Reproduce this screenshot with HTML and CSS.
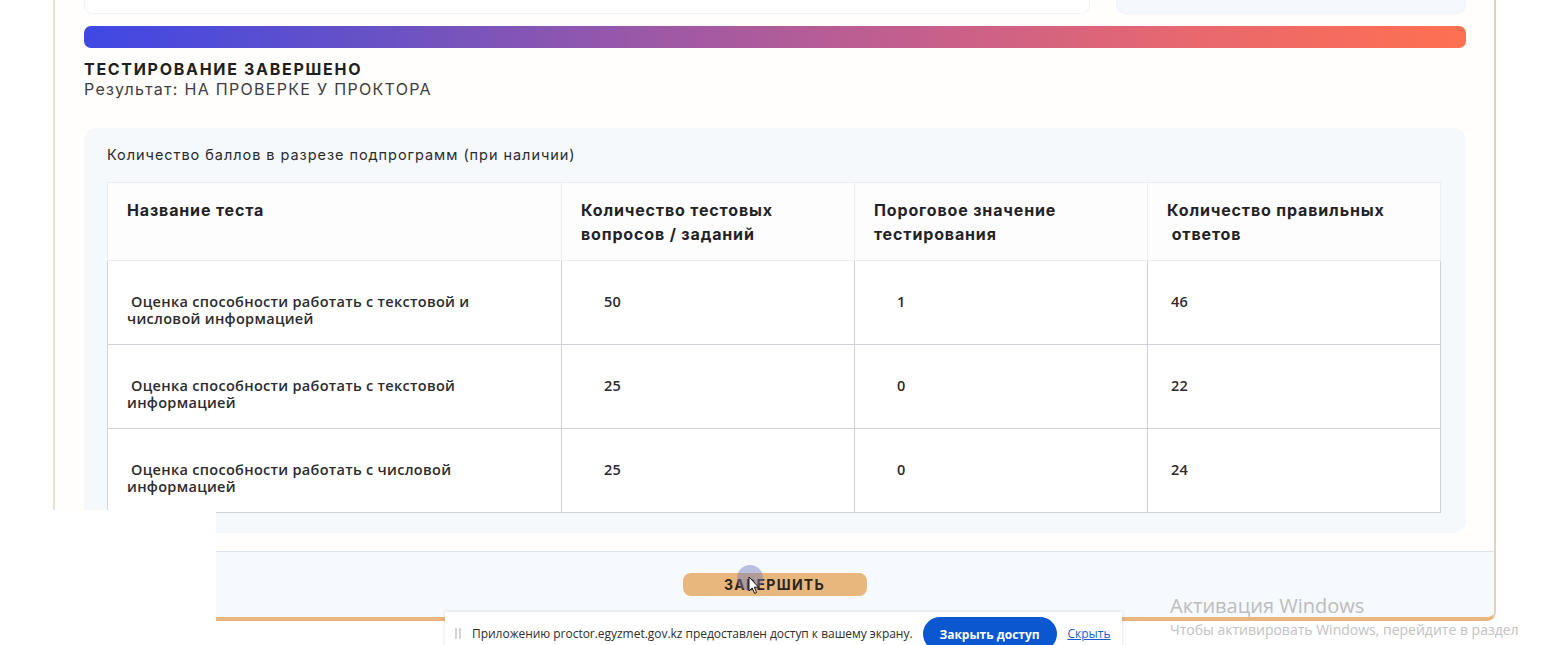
FILE: index.html
```html
<!DOCTYPE html>
<html>
<head>
    <meta charset="UTF-8">
    <title>Тестирование завершено</title>
    <link rel="stylesheet" href="styles.css">
</head>
<body>
    <div class="result-card">
        <div class="card-body">
            <div class="top-row">
                <div class="top-box"></div>
                <div class="top-box side"></div>
            </div>
            <div class="progress-bar"></div>
            <div class="status">
                <h1>ТЕСТИРОВАНИЕ ЗАВЕРШЕНО</h1>
                <p>Результат: НА ПРОВЕРКЕ У ПРОКТОРА</p>
            </div>
            <div class="scores">
                <div class="scores-title">Количество баллов в разрезе подпрограмм (при наличии)</div>
                <table class="scores-table">
                    <thead>
                        <tr>
                            <th class="col-name">Название теста</th>
                            <th class="col-count">Количество тестовых<br>вопросов / заданий</th>
                            <th class="col-count">Пороговое значение<br>тестирования</th>
                            <th class="col-count">Количество правильных<br>&nbsp;ответов</th>
                        </tr>
                    </thead>
                    <tbody>
                        <tr>
                            <td>&nbsp;Оценка способности работать с текстовой и<br>числовой информацией</td>
                            <td class="num">50</td>
                            <td class="num">1</td>
                            <td class="num last">46</td>
                        </tr>
                        <tr>
                            <td>&nbsp;Оценка способности работать с текстовой<br>информацией</td>
                            <td class="num">25</td>
                            <td class="num">0</td>
                            <td class="num last">22</td>
                        </tr>
                        <tr>
                            <td>&nbsp;Оценка способности работать с числовой<br>информацией</td>
                            <td class="num">25</td>
                            <td class="num">0</td>
                            <td class="num last">24</td>
                        </tr>
                    </tbody>
                </table>
            </div>
        </div>
        <div class="card-footer">
            <button class="finish-button">ЗАВЕРШИТЬ</button>
        </div>
    </div>

    <!-- screen capture artifacts -->
    <div class="capture-gap"></div>

    <svg class="cursor" width="30" height="32" viewBox="0 0 30 32">
        <circle cx="14" cy="13" r="13" fill="rgba(110,120,185,0.45)"/>
        <path d="M13 12 L13 26 L16.2 23 L18.6 28.4 L20.6 27.5 L18.3 22.2 L22.6 22.2 Z" fill="#fff" stroke="#111" stroke-width="1"/>
    </svg>

    <div class="share-bar">
        <span class="grip"></span>
        <span class="share-text">Приложению proctor.egyzmet.gov.kz предоставлен доступ к вашему экрану.</span>
        <button class="share-stop">Закрыть доступ</button>
        <a class="share-hide" href="#">Скрыть</a>
    </div>

    <div class="activation">
        <div class="activation-title">Активация Windows</div>
        <div class="activation-text">Чтобы активировать Windows, перейдите в раздел</div>
    </div>
</body>
</html>
```

FILE: styles.css
```css
* {
    margin: 0;
    padding: 0;
    box-sizing: border-box;
}

body {
    width: 1543px;
    height: 645px;
    overflow: hidden;
    position: relative;
    background-color: #ffffff;
    font-family: 'Inter', 'Open Sans', sans-serif;
    color: #222;
}

.result-card {
    margin-left: 53px;
    width: 1443px;
    background-color: #fffefd;
    border-left: 2px solid #e9e2d0;
    border-right: 2px solid #e3d2b3;
    border-bottom: 4px solid #e8b67f;
    border-bottom-right-radius: 9px;
}

.card-body {
    padding: 0 28px 18px 29px;
}

.top-row {
    display: flex;
    gap: 26px;
    height: 14px;
}

.top-box {
    width: 1006px;
    background-color: #ffffff;
    border: 1px solid #f2f2f2;
    border-top: none;
    border-radius: 0 0 9px 9px;
}

.top-box.side {
    flex: 1;
    background-color: #f5f9fd;
    border-color: #eef3f8;
}

.progress-bar {
    margin-top: 12px;
    height: 22px;
    border-radius: 7px;
    background: linear-gradient(90deg, #3f48e4 0%, #6a52c4 22%, #9a58a8 40%, #c8608a 62%, #e8686f 80%, #ff7050 100%);
}

.status {
    margin-top: 11px;
}

.status h1 {
    font-size: 16px;
    line-height: 20px;
    font-weight: 700;
    color: #1f1f22;
    letter-spacing: 1.7px;
}

.status p {
    font-size: 16px;
    line-height: 20px;
    color: #3d3d40;
    letter-spacing: 1.3px;
}

.scores {
    margin-top: 29px;
    background-color: #f6f9fc;
    border-radius: 12px;
    padding: 17px 25px 20px 23px;
}

.scores-title {
    font-size: 14.5px;
    line-height: 20px;
    color: #2a2a2e;
    letter-spacing: 0.95px;
    margin-bottom: 17px;
}

.scores-table {
    width: 1334px;
    border-collapse: collapse;
    background-color: #ffffff;
}

.scores-table th {
    height: 78px;
    padding: 15px 19px 0;
    text-align: left;
    vertical-align: top;
    font-size: 16px;
    line-height: 24px;
    font-weight: 700;
    color: #222226;
    letter-spacing: 0.85px;
    background-color: #fdfdfe;
    border: 1px solid #eceef2;
}

.scores-table .col-name {
    width: 454px;
}

.scores-table .col-count {
    width: 293px;
}

.scores-table td {
    height: 84px;
    padding: 32px 19px 0;
    vertical-align: top;
    font-family: 'Open Sans', sans-serif;
    font-size: 14.5px;
    line-height: 17px;
    font-weight: 600;
    color: #2b2b30;
    letter-spacing: 0.3px;
    border: 1px solid #cfd3d9;
}

.scores-table td.num {
    padding-left: 42px;
}

.scores-table td.num.last {
    padding-left: 23px;
}

.card-footer {
    height: 66px;
    display: flex;
    align-items: center;
    justify-content: center;
    background-color: #f6f9fd;
    border-top: 1px solid #dde3ea;
    border-bottom-right-radius: 7px;
}

.finish-button {
    width: 184px;
    height: 23px;
    border: none;
    border-radius: 8px;
    background-color: #e8b77e;
    font-family: 'Inter', sans-serif;
    font-size: 14px;
    font-weight: 700;
    letter-spacing: 1.3px;
    color: #2e241c;
}

.capture-gap {
    position: absolute;
    left: 0;
    top: 510px;
    width: 216px;
    height: 135px;
    background-color: #ffffff;
}

.cursor {
    position: absolute;
    left: 736px;
    top: 565px;
}

.share-bar {
    position: absolute;
    left: 445px;
    top: 612px;
    width: 677px;
    height: 42px;
    display: flex;
    align-items: flex-start;
    padding: 5px 8px 0 10px;
    background-color: #ffffff;
    box-shadow: 0 0 4px rgba(0, 0, 0, 0.14);
    font-family: 'Open Sans', sans-serif;
    font-size: 12px;
    white-space: nowrap;
}

.grip {
    flex-shrink: 0;
    width: 6px;
    height: 11px;
    margin-top: 11px;
    border-left: 2px solid #d4d4d4;
    border-right: 2px solid #d4d4d4;
}

.share-text {
    flex-shrink: 0;
    margin-left: 11px;
    margin-top: 8px;
    color: #2e2e2e;
    letter-spacing: -0.03px;
}

.share-stop {
    flex-shrink: 0;
    margin-left: 10px;
    width: 134px;
    height: 34px;
    border: none;
    border-radius: 17px;
    background-color: #0b57d0;
    color: #ffffff;
    font-family: 'Open Sans', sans-serif;
    font-size: 12px;
    font-weight: 700;
}

.share-hide {
    flex-shrink: 0;
    margin-left: 11px;
    margin-top: 8px;
    color: #1a5fc8;
    font-size: 12px;
}

.activation {
    position: absolute;
    left: 1170px;
    top: 593px;
    font-family: 'Open Sans', sans-serif;
    color: #bdbdbd;
}

.activation-title {
    font-size: 20px;
    line-height: 26px;
}

.activation-text {
    font-size: 14px;
    line-height: 22px;
    color: #c2c2c2;
}
```
